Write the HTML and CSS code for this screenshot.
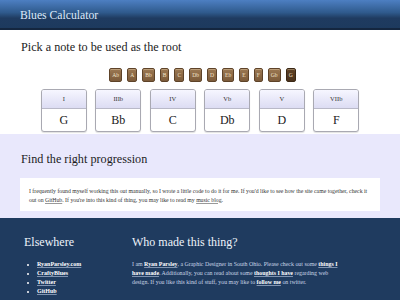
FILE: index.html
```html
<!DOCTYPE html>
<html lang="en">
<head>
    <meta charset="UTF-8" />
    <meta name="viewport" content="width=device-width, initial-scale=1.0" />
    <title>Blues Calculator</title>
    <link rel="stylesheet" href="styles.css">
</head>
<body>
    <header class="top">
        <h1>Blues Calculator</h1>
    </header>

    <section class="roots">
        <h2>Pick a note to be used as the root</h2>
        <div class="notes">
            <span class="note">Ab</span>
            <span class="note">A</span>
            <span class="note">Bb</span>
            <span class="note">B</span>
            <span class="note">C</span>
            <span class="note">Db</span>
            <span class="note">D</span>
            <span class="note">Eb</span>
            <span class="note">E</span>
            <span class="note">F</span>
            <span class="note">Gb</span>
            <span class="note active">G</span>
        </div>
        <div class="chords">
            <div class="chord"><div class="degree">I</div><div class="name">G</div></div>
            <div class="chord"><div class="degree">IIIb</div><div class="name">Bb</div></div>
            <div class="chord"><div class="degree">IV</div><div class="name">C</div></div>
            <div class="chord"><div class="degree">Vb</div><div class="name">Db</div></div>
            <div class="chord"><div class="degree">V</div><div class="name">D</div></div>
            <div class="chord"><div class="degree">VIIb</div><div class="name">F</div></div>
        </div>
    </section>

    <section class="progression">
        <h2>Find the right progression</h2>
        <div class="box">
            <p>I frequently found myself working this out manually, so I wrote a little code to do it for me. If you'd like to see how the site came together, check it out on <a href="#">GitHub</a>. If you're into this kind of thing, you may like to read my <a href="#">music blog</a>.</p>
        </div>
    </section>

    <footer class="bottom">
        <div class="elsewhere">
            <h3>Elsewhere</h3>
            <ul>
                <li><a href="#">RyanParsley.com</a></li>
                <li><a href="#">CraftyBlues</a></li>
                <li><a href="#">Twitter</a></li>
                <li><a href="#">GitHub</a></li>
            </ul>
        </div>
        <div class="about">
            <h3>Who made this thing?</h3>
            <p>I am <a href="#">Ryan Parsley</a>, a Graphic Designer in South Ohio. Please check out some <a href="#">things I have made</a>. Additionally, you can read about some <a href="#">thoughts I have</a> regarding web design. If you like this kind of stuff, you may like to <a href="#">follow me</a> on twitter.</p>
        </div>
    </footer>
</body>
</html>
```

FILE: styles.css
```css
body { margin: 0; font-family: "Liberation Serif", "Times New Roman", serif; color: #222; background: #fff; }
h1, h2, h3, p, ul { margin: 0; font-weight: normal; }

.top { height: 28px; background: linear-gradient(#4d7fc2, #2f5a8c 45%, #1f3b60 65%, #1d3a5e); border-bottom: 2px solid #14263f; padding-left: 20px; }
.top h1 { font-size: 11.7px; line-height: 15px; padding-top: 8px; color: #dce9fa; }

.roots { padding: 10px 0 2px; }
.roots h2 { font-size: 12.2px; line-height: 15px; padding-left: 21px; color: #1c1c1c; }
.notes { display: flex; justify-content: center; gap: 5px; margin: 13px 0 0 5px; }
.note { height: 12px; line-height: 12px; padding: 0 2px; font-size: 5.6px; color: #f3e4cc; border: 1px solid #5e4329; border-radius: 2px; background: linear-gradient(#9b7852, #7c5b3a); box-shadow: inset 0 1px 0 rgba(255, 235, 200, 0.35); }
.note.active { background: linear-gradient(#5f4226, #4a321c); border-color: #3a2714; }

.chords { display: flex; justify-content: center; gap: 8.5px; margin-top: 7px; }
.chord { width: 44px; border: 1px solid #a9a9b2; border-radius: 3px; overflow: hidden; box-shadow: 0 1px 1px rgba(0, 0, 0, 0.12); background: #fff; text-align: center; }
.degree { height: 18px; line-height: 18px; font-size: 6.5px; color: #333; border-bottom: 1px solid #b9b9c8; background: linear-gradient(#f6f6ff, #dcdcf3); }
.name { height: 22px; line-height: 22px; font-size: 12px; color: #1a1a1a; }

.progression { background: #e9e8fc; padding: 18px 20px 7px; }
.progression h2 { font-size: 12.2px; line-height: 15px; padding-left: 1px; color: #1c1c1c; }
.box { background: #fff; margin-top: 11px; padding: 9px 9px 7px; }
.box p { font-size: 5.75px; line-height: 8.5px; color: #333; }
.box a { color: #333; text-decoration: underline; text-decoration-color: #999; }

.bottom { background: #1f3b5f; height: 66px; padding: 17px 0 0 24px; display: flex; color: #c9d5e6; }
.bottom h3 { font-size: 12px; line-height: 15px; color: #eef3fb; }
.elsewhere { width: 108px; }
.elsewhere ul { padding-left: 13px; margin-top: 10px; font-size: 6px; line-height: 9px; font-weight: bold; color: #fff; }
.elsewhere a, .about a { color: #fff; font-weight: bold; text-decoration: underline; text-decoration-color: #7f93b0; }
.about { width: 212px; }
.about p { margin-top: 10px; font-size: 5.9px; line-height: 9px; }
```
